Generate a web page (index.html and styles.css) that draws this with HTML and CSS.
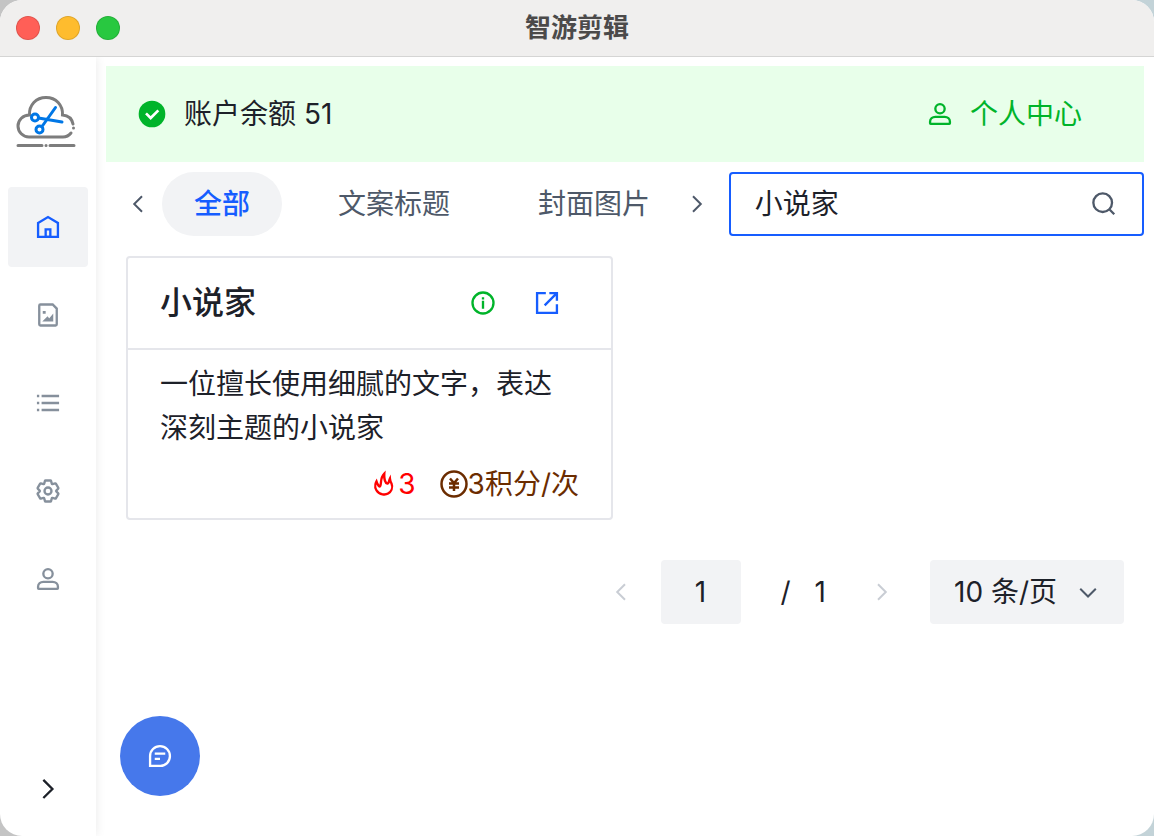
FILE: index.html
```
<!DOCTYPE html>
<html lang="zh-CN">
<head>
  <meta charset="UTF-8" />
  <meta name="viewport" content="width=device-width, initial-scale=1.0" />
  <title>智游剪辑</title>
  <link rel="stylesheet" href="styles.css">
</head>
<body>
  <div class="window">
    <header class="titlebar">
      <div class="lights">
        <span class="light close"></span>
        <span class="light minimize"></span>
        <span class="light maximize"></span>
      </div>
      <h1>智游剪辑</h1>
    </header>

    <div class="layout">
      <aside class="sidebar">
        <svg class="logo" viewBox="0 0 60 54" aria-hidden="true">
          <g class="logo-cloud">
            <path d="M57 29C56 24 52 20.500 46.500 20 47 10 40 2.500 30 2.500S13 10 13.500 20C7 20 2 25 2 31s5 11 11 11h34c3.500 0 6-1.500 8-4" />
            <path d="M57.500 33v.1M2 50.500h24M34 50.500h24M30 50.500h.1" />
          </g>
          <g class="logo-scissors">
            <circle cx="19" cy="22.500" r="3.500" />
            <circle cx="23.500" cy="34.500" r="3.500" />
            <path d="M22.500 23 46 27M26 31.500 39.500 12.500" />
          </g>
        </svg>
        <nav class="menu">
          <a href="#" class="active" aria-label="首页">
            <svg class="icon" viewBox="0 0 48 48"><path d="M7 17 24 7l17 10v24H7V17Z" /><path d="M20 28h8v13h-8V28Z" /></svg>
          </a>
          <a href="#" aria-label="图片">
            <svg class="icon" viewBox="0 0 48 48"><path d="m26 33 5-6v6h-5Zm0 0-3-4-4 4h7Zm11 9H11a2 2 0 0 1-2-2V8a2 2 0 0 1 2-2h21l7 7v27a2 2 0 0 1-2 2ZM17 19h1v1h-1v-1Z" /></svg>
          </a>
          <a href="#" aria-label="列表">
            <svg class="icon" viewBox="0 0 48 48"><path d="M13 24h30M5 12h4m4 24h30M13 12h30M5 24h4M5 36h4" /></svg>
          </a>
          <a href="#" aria-label="设置">
            <svg class="icon" viewBox="0 0 48 48"><path d="M18.797 6.732A1 1 0 0 1 19.760 6h8.480a1 1 0 0 1 .964.732l1.285 4.628a1 1 0 0 0 1.213.7l4.651-1.200a1 1 0 0 1 1.116.468l4.240 7.344a1 1 0 0 1-.153 1.200L38.193 23.300a1 1 0 0 0 0 1.402l3.364 3.427a1 1 0 0 1 .153 1.200l-4.240 7.344a1 1 0 0 1-1.116.468l-4.650-1.200a1 1 0 0 0-1.214.7l-1.285 4.628a1 1 0 0 1-.964.732h-8.480a1 1 0 0 1-.963-.732L17.510 36.640a1 1 0 0 0-1.213-.7l-4.650 1.200a1 1 0 0 1-1.116-.468l-4.240-7.344a1 1 0 0 1 .153-1.200L9.809 24.700a1 1 0 0 0 0-1.402l-3.364-3.427a1 1 0 0 1-.153-1.200l4.240-7.344a1 1 0 0 1 1.116-.468l4.650 1.200a1 1 0 0 0 1.213-.7l1.286-4.628Z" /><circle cx="24" cy="24" r="6" /></svg>
          </a>
          <a href="#" aria-label="用户">
            <svg class="icon" viewBox="0 0 48 48"><path d="M7 37c0-4.970 4.030-8 9-8h16c4.970 0 9 3.030 9 8v3a1 1 0 0 1-1 1H8a1 1 0 0 1-1-1v-3Z" /><circle cx="24" cy="15" r="8" /></svg>
          </a>
        </nav>
        <button class="expand" type="button" aria-label="展开菜单">
          <svg class="icon" viewBox="0 0 48 48"><path d="m16 39.513 15.556-15.557L16 8.400" /></svg>
        </button>
      </aside>

      <main class="content">
        <div class="alert">
          <svg class="alert-icon" viewBox="0 0 48 48" aria-hidden="true"><circle cx="24" cy="24" r="20" /><path d="m15 23 7 7 11.500-11.500" /></svg>
          <span class="balance">账户余额 51</span>
          <button class="profile" type="button">
            <svg class="icon" viewBox="0 0 48 48" aria-hidden="true"><path d="M7 37c0-4.970 4.030-8 9-8h16c4.970 0 9 3.030 9 8v3a1 1 0 0 1-1 1H8a1 1 0 0 1-1-1v-3Z" /><circle cx="24" cy="15" r="8" /></svg>
            个人中心
          </button>
        </div>

        <div class="toolbar">
          <div class="tabs">
            <button class="tab-arrow" type="button" aria-label="上一组">
              <svg class="icon small" viewBox="0 0 48 48"><path d="M32 8.400 16.444 23.956 32 39.513" /></svg>
            </button>
            <div class="tab-list">
              <button class="tab active" type="button">全部</button>
              <button class="tab" type="button">文案标题</button>
              <button class="tab" type="button">封面图片</button>
            </div>
            <button class="tab-arrow" type="button" aria-label="下一组">
              <svg class="icon small" viewBox="0 0 48 48"><path d="m16 39.513 15.556-15.557L16 8.400" /></svg>
            </button>
          </div>
          <label class="search">
            <input type="text" id="searchInput" value="小说家" aria-label="搜索" />
            <svg class="icon" viewBox="0 0 48 48" aria-hidden="true"><path d="M33.072 33.071c6.248-6.248 6.248-16.379 0-22.627-6.249-6.249-16.380-6.249-22.628 0-6.248 6.248-6.248 16.379 0 22.627 6.248 6.248 16.380 6.248 22.628 0Zm0 0 8.485 8.485" /></svg>
          </label>
        </div>

        <section class="cards">
          <article class="card">
            <div class="card-header">
              <h2>小说家</h2>
              <button class="info" type="button" aria-label="详情">
                <svg class="icon" viewBox="0 0 48 48"><path d="M24 20v14m0-16v-4m18 10c0 9.941-8.059 18-18 18S6 33.941 6 24 14.059 6 24 6s18 8.059 18 18Z" /></svg>
              </button>
              <button class="open" type="button" aria-label="打开">
                <svg class="icon" viewBox="0 0 48 48"><path d="M41 26v15H7V7h15M28 7h13v13M20 28 40 8" /></svg>
              </button>
            </div>
            <div class="card-body">
              <p>一位擅长使用细腻的文字，表达深刻主题的小说家</p>
              <div class="card-meta">
                <span class="hot">
                  <svg class="icon" viewBox="0 0 48 48" aria-hidden="true"><path d="M17.577 27.477C20.022 22.579 17.041 12.980 24.546 6c0 0-1.156 15.550 5.360 17.181 2.145.537 2.680-5.369 4.289-8.590 0 0 .536 4.832 2.680 8.590 3.217 7.517-1 14.117-5.896 17.182-4.289 2.684-14.587 2.807-19.835-5.370-4.824-7.516 0-15.570 0-15.570s4.289 12.350 6.433 8.054Z" /></svg>
                  3
                </span>
                <span class="price">
                  <svg class="icon" viewBox="0 0 56 56" aria-hidden="true"><circle cx="28" cy="28" r="25" /><path d="m20 17 8 9 8-9M28 25v17M18 27h20M18 35h20" /></svg>3积分/次
                </span>
              </div>
            </div>
          </article>
        </section>

        <div class="pagination">
          <button class="page-arrow" type="button" aria-label="上一页" disabled>
            <svg class="icon small" viewBox="0 0 48 48"><path d="M32 8.400 16.444 23.956 32 39.513" /></svg>
          </button>
          <input class="page-input" type="text" value="1" aria-label="页码" />
          <span class="page-total"><span>/</span><span>1</span></span>
          <button class="page-arrow" type="button" aria-label="下一页" disabled>
            <svg class="icon small" viewBox="0 0 48 48"><path d="m16 39.513 15.556-15.557L16 8.400" /></svg>
          </button>
          <div class="page-size">
            <select aria-label="每页条数">
              <option>10 条/页</option>
              <option>20 条/页</option>
              <option>50 条/页</option>
            </select>
            <svg class="icon small" viewBox="0 0 48 48" aria-hidden="true"><path d="M39.600 17.443 24.043 33 8.487 17.443" /></svg>
          </div>
        </div>
      </main>
    </div>

    <button class="chat" type="button" aria-label="客服">
      <svg class="icon" viewBox="0 0 48 48"><path d="M15 20h18m-18 9h9M7 41h17.630C33.670 41 41 33.670 41 24.630V24c0-9.389-7.611-17-17-17S7 14.611 7 24v17Z" /></svg>
    </button>
  </div>
</body>
</html>
```
FILE: styles.css
```
:root {
  --primary: #165dff;
  --success: #00b42a;
  --text: #1d2129;
  --text-2: #4e5969;
  --text-3: #86909c;
  --disabled: #c9cdd4;
  --border: #e5e6eb;
  --fill: #f2f3f5;
}

* {
  margin: 0;
  padding: 0;
  box-sizing: border-box;
}

body {
  font-family: Inter, 'Noto Sans CJK SC', sans-serif;
  font-size: 28px;
  line-height: 44px;
  color: var(--text);
  background: linear-gradient(90deg, #c4c4c4, #c3d3d8);
}

button,
input,
select {
  font: inherit;
  color: inherit;
  border: none;
  background: none;
}

button {
  display: flex;
  align-items: center;
  justify-content: center;
  flex-shrink: 0;
  cursor: pointer;
}

.icon {
  width: 28px;
  height: 28px;
  flex-shrink: 0;
  fill: none;
  stroke: currentColor;
  stroke-width: 4;
}

.icon.small {
  width: 24px;
  height: 24px;
}

.window {
  display: flex;
  flex-direction: column;
  min-height: 100vh;
  border-radius: 22px;
  overflow: hidden;
  background: white;
}

/* Title bar */
.titlebar {
  display: grid;
  grid-template-columns: 1fr auto 1fr;
  align-items: center;
  height: 57px;
  padding: 0 16px;
  background: #f0efee;
  border-bottom: 1px solid #d5d5d4;
}

.titlebar h1 {
  font-size: 26px;
  font-weight: 700;
  color: #4b4a4a;
}

.lights {
  display: flex;
  gap: 16px;
}

.light {
  width: 24px;
  height: 24px;
  border-radius: 50%;
  border: 1px solid rgba(0, 0, 0, 0.12);
}

.close {
  background: #ff5f57;
}

.minimize {
  background: #febc2e;
}

.maximize {
  background: #28c840;
}

.layout {
  flex: 1;
  display: flex;
  overflow: hidden;
}

/* Sidebar */
.sidebar {
  display: flex;
  flex-direction: column;
  flex-shrink: 0;
  width: 96px;
  padding: 38px 8px 22px;
  box-shadow: 0 0 10px rgba(0, 0, 0, 0.09);
}

.logo {
  width: 60px;
  height: 54px;
  margin: 0 8px 38px;
  fill: none;
  stroke-width: 3;
  stroke-linecap: round;
}

.logo-cloud {
  stroke: #7d7d7d;
}

.logo-scissors {
  stroke: #0077e6;
}

.menu {
  display: flex;
  flex-direction: column;
  gap: 8px;
}

.menu a {
  display: flex;
  align-items: center;
  justify-content: center;
  height: 80px;
  border-radius: 4px;
  color: var(--text-3);
}

.menu a.active {
  color: var(--primary);
  background: var(--fill);
}

.expand {
  height: 50px;
  margin-top: auto;
}

/* Content */
.content {
  flex: 1;
  min-width: 0;
  padding: 9px 10px;
}

.alert {
  display: flex;
  align-items: center;
  height: 96px;
  padding: 0 32px 0 30px;
  background: #e8ffea;
}

.alert-icon {
  width: 32px;
  height: 32px;
  margin-right: 16px;
  fill: var(--success);
}

.alert-icon path {
  fill: none;
  stroke: white;
  stroke-width: 4;
}

.profile {
  gap: 16px;
  margin-left: auto;
  padding: 0 30px;
  color: var(--success);
}

.toolbar {
  display: grid;
  grid-template-columns: minmax(0, 3fr) minmax(0, 2fr);
  margin-top: 10px;
}

.tabs {
  display: flex;
  padding: 0 8px;
}

.tab-arrow {
  width: 48px;
  color: var(--text-2);
}

.tab-list {
  flex: 1;
  display: flex;
  gap: 24px;
  min-width: 0;
  overflow: hidden;
}

.tab {
  height: 64px;
  padding: 0 32px;
  border-radius: 32px;
  color: var(--text-2);
}

.tab.active {
  font-weight: 500;
  color: var(--primary);
  background: var(--fill);
}

.search {
  display: flex;
  align-items: center;
  height: 64px;
  padding: 0 24px;
  border: 2px solid var(--primary);
  border-radius: 4px;
  color: var(--text-2);
}

.search input {
  flex: 1;
  min-width: 0;
  outline: none;
  color: var(--text);
}

/* Cards */
.cards {
  display: grid;
  grid-template-columns: repeat(2, 1fr);
  gap: 24px;
  padding: 20px;
}

.card {
  border: 2px solid var(--border);
  border-radius: 4px;
}

.card-header {
  display: flex;
  align-items: center;
  height: 92px;
  padding: 0 32px;
  border-bottom: 2px solid var(--border);
}

.card-header h2 {
  flex: 1;
  font-size: 32px;
  font-weight: 500;
}

.card-header button {
  width: 64px;
  height: 64px;
}

.info {
  color: var(--success);
}

.open {
  color: var(--primary);
}

.card-body {
  padding: 12px 32px;
}

.card-meta {
  display: flex;
  justify-content: flex-end;
  gap: 24px;
  margin-top: 12px;
}

.card-meta span {
  display: flex;
  align-items: center;
}

.hot {
  color: #ff0000;
}

.price {
  color: #6b2c00;
}

.price .icon {
  stroke-width: 5;
}

/* Pagination */
.pagination {
  display: flex;
  justify-content: flex-end;
  padding: 20px;
}

.page-arrow {
  width: 64px;
  height: 64px;
  color: var(--disabled);
}

.page-input {
  width: 80px;
  margin-left: 8px;
  border-radius: 4px;
  text-align: center;
  background: var(--fill);
}

.page-total {
  display: flex;
  align-items: center;
  gap: 24px;
  padding: 0 24px 0 40px;
}

.page-size {
  display: grid;
  align-items: center;
  width: 194px;
  height: 64px;
  margin-left: 16px;
  border-radius: 4px;
  background: var(--fill);
}

.page-size select,
.page-size .icon {
  grid-area: 1 / 1;
}

.page-size select {
  appearance: none;
  height: 64px;
  padding: 0 56px 0 24px;
}

.page-size .icon {
  justify-self: end;
  margin-right: 24px;
  color: var(--text-2);
  pointer-events: none;
}

.chat {
  position: fixed;
  left: 120px;
  bottom: 40px;
  width: 80px;
  height: 80px;
  border-radius: 50%;
  color: white;
  background: #4678eb;
}
```
